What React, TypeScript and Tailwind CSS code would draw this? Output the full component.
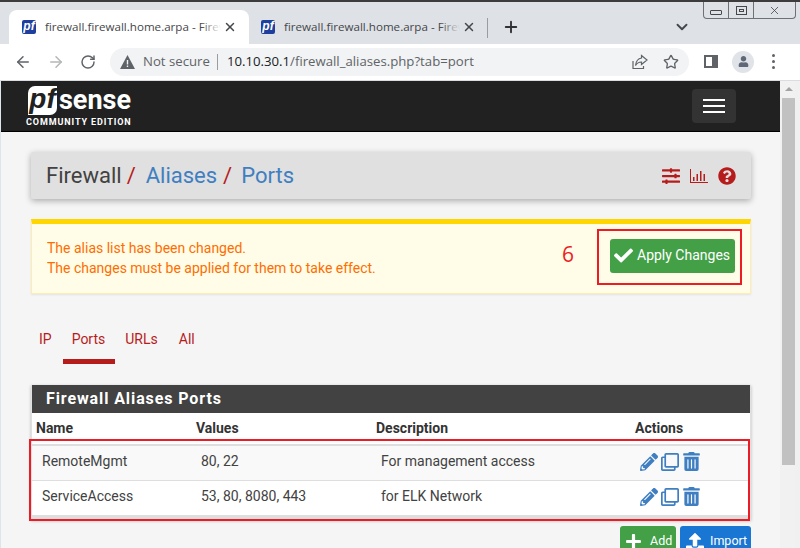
import { ArrowLeft, ArrowRight, ChevronDown, Plus, RotateCw, Star, X } from "lucide-react"
import { FaCheck, FaPencilAlt, FaPlus, FaQuestionCircle, FaRegClone, FaSlidersH, FaTrashAlt, FaUpload, FaUser } from "react-icons/fa"

const Favicon = () => (
  <div className="w-[14px] h-[14px] shrink-0 rounded-[2px] bg-[#1e3f9e] text-white text-[12px] leading-[13px] font-bold italic text-center font-['Liberation_Sans',sans-serif]">
    pf
  </div>
)

const Tab = ({ active }: { active?: boolean }) => (
  <div className={`w-[240px] h-[34px] flex items-center pl-[13px] pr-[12px] rounded-t-[8px] ${active ? "bg-white" : ""}`}>
    <Favicon />
    <div className="relative ml-[9px] w-[176px] overflow-hidden whitespace-nowrap text-[11.6px] text-[#45474a]">
      firewall.firewall.home.arpa - Firew
      <div className={`absolute right-0 top-0 bottom-0 w-[20px] bg-gradient-to-r from-transparent ${active ? "to-white" : "to-[#dee1e6]"}`} />
    </div>
    <X size={14} strokeWidth={2.5} className="ml-auto text-[#45474a]" />
  </div>
)

const ChartIcon = () => (
  <svg width="18" height="16" viewBox="0 0 18 16" fill="#b71c1c">
    <path d="M0 1h1v13h17v1H0z" />
    <path d="M3 9h1.500v4H3zM6.500 6H8v7H6.500zM10 3h1.500v10H10zM13.500 6H15v7h-1.500z" />
  </svg>
)

const ShareIcon = () => (
  <svg width="16" height="16" viewBox="0 0 16 16" fill="none" stroke="#5f6368" strokeWidth="1.200">
    <path d="M1 7v7.500h10.500V12" />
    <path d="M9.500 1.500 15 6l-5.500 4.500V8C7 8 5 9 3.500 11.500 4 7.500 6 4.500 9.500 4z" />
  </svg>
)

const Row = ({ name, values, description, shaded }: { name: string; values: string; description: string; shaded?: boolean }) => (
  <div className={`grid grid-cols-[159px_180px_259px_120px] h-[35px] pb-[3px] items-center text-[14px] text-[#424242] border-b border-[#dedede] ${shaded ? "bg-[#f9f9f9]" : "bg-white"}`}>
    <div className="pl-[10px]">{name}</div>
    <div className="pl-[10px]">{values}</div>
    <div className="pl-[10px]">{description}</div>
    <div className="pl-[10px] flex items-center gap-[3px] text-[#3f7fc1]">
      <FaPencilAlt size={18} />
      <FaRegClone size={18} />
      <FaTrashAlt size={19} />
    </div>
  </div>
)

const App = () => {
  return (
    <div className="relative w-[800px] h-[548px] overflow-hidden flex flex-col bg-white font-['Roboto',sans-serif]">
      {/* browser tabs */}
      <div className="h-[44px] shrink-0 border-t-2 border-[#3c3c3c] bg-[#dee1e6] flex items-end pl-[9px] font-['Open_Sans',sans-serif]">
        <Tab active />
        <div className="-ml-[1px]">
          <Tab />
        </div>
        <div className="self-center mt-[10px] h-[20px] border-l border-[#9a9ca0] -ml-[1px]" />
        <Plus size={18} strokeWidth={2.5} className="self-center mt-[8px] ml-[14px] text-[#303134]" />
        <ChevronDown size={18} strokeWidth={2.5} className="self-center mt-[8px] ml-[153px] text-[#45474a]" />
      </div>
      <div className="absolute left-[703px] top-[2px] w-[93px] h-[17px] border border-t-0 border-[#6e7074] rounded-b-[4px] flex text-[#45474a]">
        <div className="w-[25px] border-r border-[#6e7074] flex items-center justify-center">
          <div className="w-[12px] h-[5px] mt-[4px] border border-[#45474a] rounded-[1px]" />
        </div>
        <div className="w-[25px] border-r border-[#6e7074] flex items-center justify-center">
          <div className="w-[11px] h-[9px] border border-[#45474a] flex items-center justify-center">
            <div className="w-[5px] h-[3px] border border-[#45474a]" />
          </div>
        </div>
        <div className="flex-1 flex items-center justify-center">
          <X size={13} strokeWidth={1.500} />
        </div>
      </div>

      {/* toolbar */}
      <div className="h-[37px] shrink-0 bg-white flex items-center pb-[1px] pl-[14px] font-['Open_Sans',sans-serif] border-b border-[#dadce0]">
        <ArrowLeft size={18} strokeWidth={2} className="text-[#5f6368]" />
        <ArrowRight size={18} strokeWidth={2} className="ml-[15px] text-[#b4b6b9]" />
        <RotateCw size={16} strokeWidth={2.200} className="ml-[15px] text-[#5f6368]" />
        <div className="ml-[14px] w-[579px] h-[28px] rounded-full bg-[#f1f3f4] flex items-center pl-[10px] pr-[10px]">
          <svg width="15" height="14" viewBox="0 0 15 14" fill="#5f6368">
            <path d="M7.500 0 15 14H0z" />
            <path d="M6.800 5h1.400v4.500H6.800zM6.800 10.500h1.400V12H6.800z" fill="#f1f3f4" />
          </svg>
          <span className="ml-[8px] text-[13.2px] text-[#5f6368]">Not secure</span>
          <div className="ml-[7px] h-[16px] border-l border-[#9a9ca0]" />
          <span className="ml-[9px] text-[13.2px] text-[#202124]">
            10.10.30.1<span className="text-[#5f6368]">/firewall_aliases.php?tab=port</span>
          </span>
          <div className="ml-auto flex items-center gap-[15px]">
            <ShareIcon />
            <Star size={16} strokeWidth={2} className="text-[#5f6368]" />
          </div>
        </div>
        <div className="ml-[15px] w-[14px] h-[13px] border-2 border-r-[6px] border-[#5f6368]" />
        <div className="ml-[14px] w-[22px] h-[22px] rounded-full bg-[#e0e3e8] flex items-center justify-center text-[#5f6877]">
          <FaUser size={11} />
        </div>
        <div className="ml-[18px] flex flex-col gap-[3px]">
          <div className="w-[3px] h-[3px] rounded-full bg-[#5f6368]" />
          <div className="w-[3px] h-[3px] rounded-full bg-[#5f6368]" />
          <div className="w-[3px] h-[3px] rounded-full bg-[#5f6368]" />
        </div>
      </div>

      <div className="flex flex-1 min-h-0">
        <div className="flex-1 min-w-0 flex flex-col bg-[#f5f5f5] border-l border-[#dfe3ea]">
          {/* pfSense navbar */}
          <div className="h-[51px] shrink-0 bg-[#212121] border-b border-black flex items-center pl-[25px] pr-[44px]">
            <div className="flex flex-col items-start pt-[1px]">
              <div className="flex items-center h-[30px] ml-[2px]">
                <div className="w-[29px] h-[29px] bg-white rounded-tl-[7px] rounded-br-[7px] text-[#212121] text-[28px] leading-[26px] font-bold italic text-center font-['Liberation_Sans',sans-serif]">
                  pf
                </div>
                <span className="ml-[2px] text-white text-[27px] leading-[28px] font-bold">sense</span>
              </div>
              <span className="mt-[2px] text-white text-[9px] leading-[11px] font-bold tracking-[0.9px] whitespace-nowrap">COMMUNITY EDITION</span>
            </div>
            <div className="ml-auto w-[44px] h-[34px] rounded-[4px] bg-[#333333] flex flex-col items-center justify-center gap-[4px]">
              <div className="w-[22px] h-[2px] bg-white" />
              <div className="w-[22px] h-[2px] bg-white" />
              <div className="w-[22px] h-[2px] bg-white" />
            </div>
          </div>

          {/* page */}
          <div className="flex-1 min-h-0 pt-[20px] pl-[30px] pr-[29px]">
            <div className="h-[47px] bg-[#e0e0e0] rounded-[2px] shadow-[0_2px_6px_rgba(0,0,0,0.3)] flex items-center pl-[15px] pr-[15px] text-[22px] whitespace-nowrap">
              <span className="text-[#424242]">Firewall</span>
              <span className="ml-[5px] text-[#b71c1c]">/</span>
              <span className="ml-[10px] text-[#3f7fc1]">Aliases</span>
              <span className="ml-[6px] text-[#b71c1c]">/</span>
              <span className="ml-[9px] text-[#3f7fc1]">Ports</span>
              <div className="ml-auto flex items-center gap-[10px] text-[#b71c1c]">
                <FaSlidersH size={18} />
                <ChartIcon />
                <FaQuestionCircle size={18} />
              </div>
            </div>

            <div className="mt-[20px] h-[75px] bg-[#fffde7] border-t-[5px] border-x border-b border-t-[#ffd600] border-x-[#ffecb3] border-b-[#ffecb3] flex items-center pl-[15px] pr-[15px] shadow-[0_1px_2px_rgba(0,0,0,0.08)]">
              <div className="mb-[2px] text-[14px] leading-[20px] text-[#ff6d00]">
                <div>The alias list has been changed.</div>
                <div>The changes must be applied for them to take effect.</div>
              </div>
              <button className="ml-auto mb-[6px] w-[125px] h-[34px] rounded-[3px] bg-[#43a047] text-white text-[14px] flex items-center pl-[4px] whitespace-nowrap">
                <FaCheck size={19} />
                <span className="ml-[4px]">Apply Changes</span>
              </button>
            </div>

            <div className="mt-[30px] flex text-[14px] text-[#b71c1c]">
              <div className="pl-[8px] pr-[11px] h-[40px] pt-[5px]">IP</div>
              <div className="pl-[9px] pr-[10px] h-[40px] pt-[5px] border-b-[5px] border-[#b71c1c]">Ports</div>
              <div className="pl-[10px] pr-[11px] h-[40px] pt-[5px]">URLs</div>
              <div className="px-[10px] h-[40px] pt-[5px]">All</div>
            </div>

            <div className="mt-[21px] border border-t-0 border-[#e0e0e0] shadow-[0_1px_3px_rgba(0,0,0,0.25)] bg-white">
              <div className="h-[28px] bg-[#424242] pl-[14px] flex items-center text-white text-[16px] font-bold tracking-[0.9px]">
                Firewall Aliases Ports
              </div>
              <div className="grid grid-cols-[159px_180px_259px_120px] h-[33px] items-center text-[14px] font-bold text-[#333333] border-b-2 border-[#dedede]">
                <div className="pl-[4px]">Name</div>
                <div className="pl-[5px]">Values</div>
                <div className="pl-[5px]">Description</div>
                <div className="pl-[5px]">Actions</div>
              </div>
              <Row name="RemoteMgmt" values="80, 22" description="For management access" shaded />
              <Row name="ServiceAccess" values="53, 80, 8080, 443" description="for ELK Network" />
              <div className="h-[3px] bg-[#dedede]" />
            </div>

            <div className="mt-[6px] flex justify-end gap-[4px] text-[12.5px] leading-[16px] text-white">
              <button className="w-[56px] h-[34px] rounded-[3px] bg-[#43a047] flex items-start pt-[7px] pl-[5px]">
                <FaPlus size={17} />
                <span className="ml-[8px]">Add</span>
              </button>
              <button className="w-[71px] h-[34px] rounded-[3px] bg-[#1976d2] flex items-start pt-[7px] pl-[6px]">
                <FaUpload size={18} />
                <span className="ml-[6px]">Import</span>
              </button>
            </div>
          </div>
        </div>

        {/* scrollbar */}
        <div className="w-[20px] shrink-0 flex bg-[#f0f0f0]">
          <div className="w-[15px] flex flex-col items-center bg-[#f1f1f1] pl-[2px]">
            <div className="mt-[6px] w-0 h-0 border-x-[4px] border-b-[4px] border-x-transparent border-b-[#a3a3a3]" />
            <div className="mt-[7px] w-full h-[367px] bg-[#c1c1c1]" />
          </div>
        </div>
      </div>

      {/* red annotations from the screenshot */}
      <span className="absolute left-[562px] top-[241px] text-[21px] leading-[26px] text-[#ed1c24] font-['Open_Sans',sans-serif]">6</span>
      <div className="absolute left-[597px] top-[229px] w-[145px] h-[56px] border-2 border-[#ed1c24]" />
      <div className="absolute left-[29px] top-[439px] w-[721px] h-[82px] border-2 border-[#ed1c24]" />
    </div>
  )
}

export default App
